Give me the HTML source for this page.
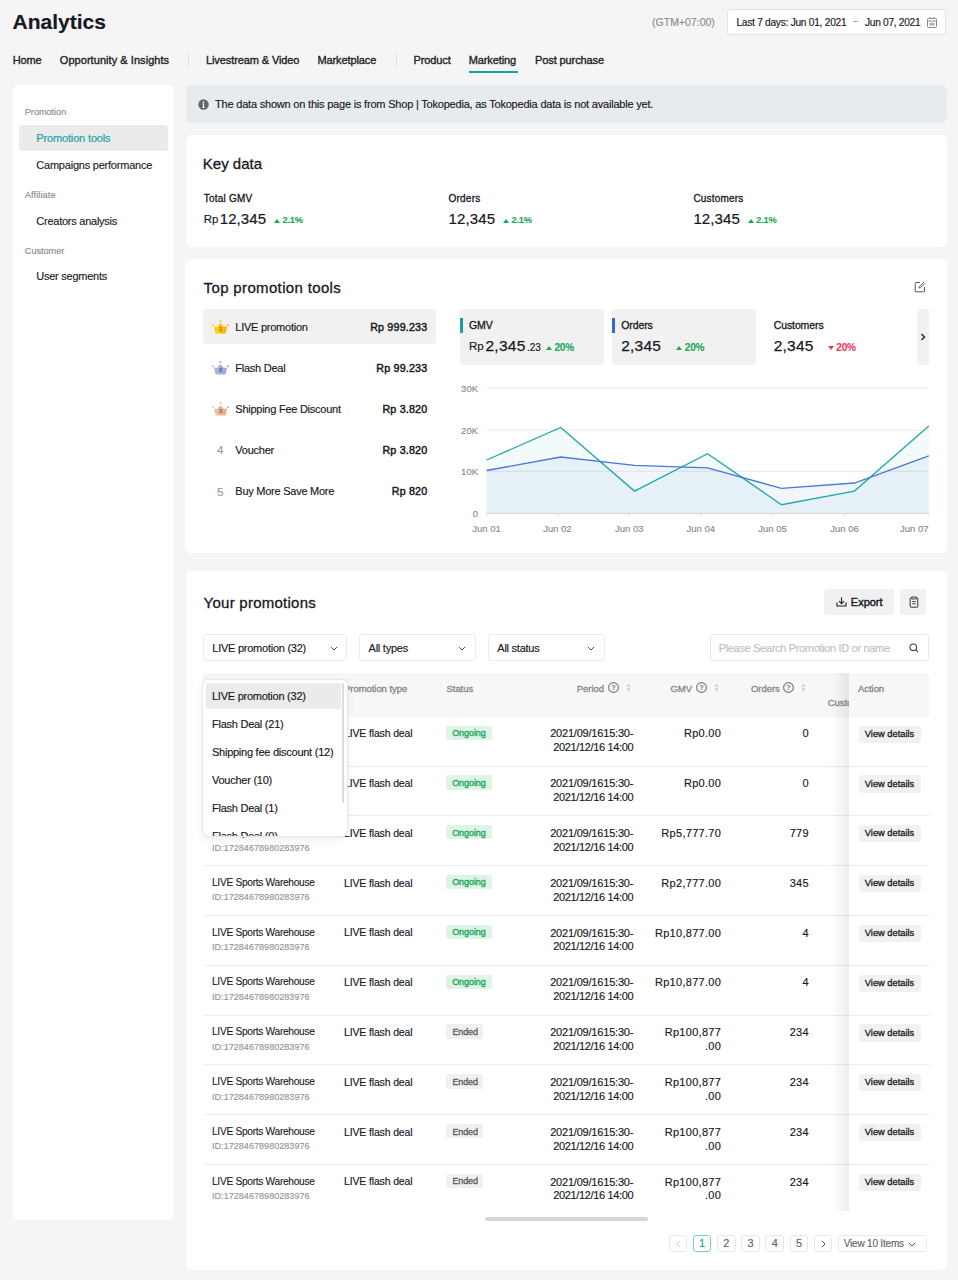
<!DOCTYPE html>
<html><head><meta charset="utf-8"><style>
html,body{margin:0;padding:0}
body{width:958px;height:1280px;overflow:hidden;background:#f5f5f5;position:relative;font-family:"Liberation Sans",sans-serif;color:#161823}
.a{position:absolute;line-height:1;white-space:nowrap;-webkit-text-stroke-width:0.15px}
.b{position:absolute}
</style></head><body>
<div class="a" style="left:12.50px;top:11.42px;font-size:21px;font-weight:700;color:#161823">Analytics</div>
<div class="a" style="right:243.20px;top:17.41px;font-size:10.5px;color:#8a8b91">(GTM+07:00)</div>
<div class="b" style="left:727.40px;top:9.00px;width:218.20px;height:25.60px;background:#fff;border:1px solid #e3e3e3;border-radius:3px;box-sizing:border-box"></div>
<div class="a" style="left:736.40px;top:17.66px;font-size:10.2px;color:#161823;letter-spacing:-0.27px">Last 7 days: Jun 01, 2021</div>
<div class="b" style="left:853.20px;top:21.20px;width:4.80px;height:1.00px;background:#aaa"></div>
<div class="a" style="left:865.00px;top:17.66px;font-size:10.2px;color:#161823;letter-spacing:-0.3px">Jun 07, 2021</div>
<svg class="b" style="left:925.5px;top:15.5px" width="12" height="13" viewBox="0 0 12 13"><rect x="1.5" y="2.5" width="9" height="9" rx="1" fill="none" stroke="#888" stroke-width="1"/><line x1="1.5" y1="5" x2="10.5" y2="5" stroke="#888"/><line x1="4" y1="1" x2="4" y2="3" stroke="#888"/><line x1="8" y1="1" x2="8" y2="3" stroke="#888"/><rect x="3.5" y="7" width="5" height="2.5" fill="#aaa"/></svg>
<div class="a" style="left:12.70px;top:54.69px;font-size:11px;color:#222;-webkit-text-stroke:0.35px #222;letter-spacing:-0.1px">Home</div>
<div class="a" style="left:59.80px;top:54.69px;font-size:11px;color:#222;-webkit-text-stroke:0.35px #222;letter-spacing:0.05px">Opportunity &amp; Insights</div>
<div class="a" style="left:206.00px;top:54.69px;font-size:11px;color:#222;-webkit-text-stroke:0.35px #222;letter-spacing:-0.1px">Livestream &amp; Video</div>
<div class="a" style="left:317.40px;top:54.69px;font-size:11px;color:#222;-webkit-text-stroke:0.35px #222;letter-spacing:-0.1px">Marketplace</div>
<div class="a" style="left:413.50px;top:54.69px;font-size:11px;color:#222;-webkit-text-stroke:0.35px #222;letter-spacing:-0.1px">Product</div>
<div class="a" style="left:468.70px;top:54.69px;font-size:11px;color:#222;-webkit-text-stroke:0.35px #222;letter-spacing:-0.1px">Marketing</div>
<div class="a" style="left:535.00px;top:54.69px;font-size:11px;color:#222;-webkit-text-stroke:0.35px #222;letter-spacing:-0.1px">Post purchase</div>
<div class="b" style="left:188.00px;top:55.00px;width:1.00px;height:10.00px;background:#ddd"></div>
<div class="b" style="left:395.50px;top:55.00px;width:1.00px;height:10.00px;background:#ddd"></div>
<div class="b" style="left:468.70px;top:71.30px;width:49.00px;height:2.00px;background:#16a0a0"></div>
<div class="b" style="left:12.90px;top:85.00px;width:161.10px;height:1135.40px;background:#fff;border-radius:6px"></div>
<div class="b" style="left:18.80px;top:124.80px;width:149.20px;height:26.00px;background:#ebebeb;border-radius:3px"></div>
<div class="a" style="left:24.80px;top:107.51px;font-size:9.2px;color:#8a8b91;letter-spacing:-0.05px">Promotion</div>
<div class="a" style="left:36.30px;top:132.59px;font-size:11px;color:#16a0a0;letter-spacing:-0.15px">Promotion tools</div>
<div class="a" style="left:36.30px;top:160.39px;font-size:11px;color:#222;letter-spacing:-0.22px">Campaigns performance</div>
<div class="a" style="left:24.80px;top:191.01px;font-size:9.2px;color:#8a8b91;letter-spacing:0.1px">Affiliate</div>
<div class="a" style="left:36.30px;top:215.89px;font-size:11px;color:#222;letter-spacing:-0.25px">Creators analysis</div>
<div class="a" style="left:24.80px;top:246.81px;font-size:9.2px;color:#8a8b91;letter-spacing:-0.05px">Customer</div>
<div class="a" style="left:36.30px;top:271.49px;font-size:11px;color:#222;letter-spacing:-0.25px">User segments</div>
<div class="b" style="left:185.50px;top:85.00px;width:761.70px;height:37.60px;background:#e8ebee;border-radius:6px"></div>
<svg class="b" style="left:197.8px;top:98.6px" width="11" height="11" viewBox="0 0 11 11"><circle cx="5.5" cy="5.5" r="5.2" fill="#64676d"/><path d="M4.4 4.6 H6.1 V8.2 H6.7 V8.9 H4.3 V8.2 H4.9 V5.3 H4.4 Z" fill="#fff"/><circle cx="5.5" cy="3.1" r="0.85" fill="#fff"/></svg>
<div class="a" style="left:215.00px;top:98.69px;font-size:11px;color:#161823;letter-spacing:-0.2px">The data shown on this page is from Shop | Tokopedia, as Tokopedia data is not available yet.</div>
<div class="b" style="left:185.50px;top:134.50px;width:761.70px;height:112.50px;background:#fff;border-radius:6px"></div>
<div class="a" style="left:202.80px;top:156.10px;font-size:15px;color:#161823;-webkit-text-stroke:0.3px #161823;letter-spacing:0px">Key data</div>
<div class="a" style="left:203.80px;top:193.83px;font-size:10px;color:#161823;-webkit-text-stroke:0.3px #161823;letter-spacing:0.2px">Total GMV</div>
<div class="a" style="left:203.80px;top:214.06px;font-size:11.5px;color:#161823">Rp</div>
<div class="a" style="left:219.70px;top:211.30px;font-size:15px;color:#161823;letter-spacing:0.1px;-webkit-text-stroke:0.2px #161823">12,345</div>
<svg class="b" style="left:274.0px;top:219px" width="6" height="4" viewBox="0 0 6 4"><path d="M0 4 L3 0 L6 4Z" fill="#1ca85a"/></svg>
<div class="a" style="left:282.50px;top:216.13px;font-size:9.3px;color:#1ca85a;font-weight:700;letter-spacing:-0.2px">2.1%</div>
<div class="a" style="left:448.60px;top:193.83px;font-size:10px;color:#161823;-webkit-text-stroke:0.3px #161823;letter-spacing:0.2px">Orders</div>
<div class="a" style="left:448.60px;top:211.30px;font-size:15px;color:#161823;letter-spacing:0.1px;-webkit-text-stroke:0.2px #161823">12,345</div>
<svg class="b" style="left:502.9px;top:219px" width="6" height="4" viewBox="0 0 6 4"><path d="M0 4 L3 0 L6 4Z" fill="#1ca85a"/></svg>
<div class="a" style="left:511.40px;top:216.13px;font-size:9.3px;color:#1ca85a;font-weight:700;letter-spacing:-0.2px">2.1%</div>
<div class="a" style="left:693.40px;top:193.83px;font-size:10px;color:#161823;-webkit-text-stroke:0.3px #161823;letter-spacing:0.2px">Customers</div>
<div class="a" style="left:693.40px;top:211.30px;font-size:15px;color:#161823;letter-spacing:0.1px;-webkit-text-stroke:0.2px #161823">12,345</div>
<svg class="b" style="left:747.7px;top:219px" width="6" height="4" viewBox="0 0 6 4"><path d="M0 4 L3 0 L6 4Z" fill="#1ca85a"/></svg>
<div class="a" style="left:756.20px;top:216.13px;font-size:9.3px;color:#1ca85a;font-weight:700;letter-spacing:-0.2px">2.1%</div>
<div class="b" style="left:185.00px;top:259.40px;width:762.20px;height:293.80px;background:#fff;border-radius:6px"></div>
<div class="a" style="left:203.60px;top:279.60px;font-size:15px;color:#161823;-webkit-text-stroke:0.3px #161823;letter-spacing:0.35px">Top promotion tools</div>
<svg class="b" style="left:914px;top:281px" width="12" height="12" viewBox="0 0 12 12"><path d="M6 1.5 H2 a0.8 0.8 0 0 0 -0.8 0.8 V10 a0.8 0.8 0 0 0 0.8 0.8 H9.7 a0.8 0.8 0 0 0 0.8 -0.8 V6" fill="none" stroke="#555" stroke-width="1"/><path d="M5 7 L5.3 5.6 L9.6 1.3 L10.7 2.4 L6.4 6.7 Z" fill="none" stroke="#555" stroke-width="0.9"/></svg>
<div class="b" style="left:203.00px;top:309.30px;width:233.40px;height:34.70px;background:#f1f1f1;border-radius:3px"></div>
<svg class="b" style="left:212.4px;top:320px" width="17" height="14" viewBox="0 0 17 14"><defs><linearGradient id="g1" x1="0" x2="1" y1="0" y2="0"><stop offset="0" stop-color="#ffd51c"/><stop offset="1" stop-color="#ffae00"/></linearGradient></defs><circle cx="8.5" cy="1.2" r="1.15" fill="#ffd51c"/><circle cx="0.9" cy="5.2" r="1.05" fill="#ffd51c"/><circle cx="15.9" cy="5.2" r="1.05" fill="#ffae00"/><path d="M1.8 6.4 L5.1 6.9 L8.3 2.9 L11.9 6.9 L15.0 6.4 L13.6 13.4 H3.6 Z" fill="url(#g1)"/><text x="8.5" y="11.3" font-size="5.5" font-family="Liberation Sans" font-weight="700" text-anchor="middle" fill="#9a6400">1</text></svg>
<svg class="b" style="left:212.4px;top:360.6px" width="17" height="14" viewBox="0 0 17 14"><defs><linearGradient id="g2" x1="0" x2="1" y1="0" y2="0"><stop offset="0" stop-color="#a9bedf"/><stop offset="1" stop-color="#94acd4"/></linearGradient></defs><circle cx="8.5" cy="1.2" r="1.15" fill="#a9bedf"/><circle cx="0.9" cy="5.2" r="1.05" fill="#a9bedf"/><circle cx="15.9" cy="5.2" r="1.05" fill="#94acd4"/><path d="M1.8 6.4 L5.1 6.9 L8.3 2.9 L11.9 6.9 L15.0 6.4 L13.6 13.4 H3.6 Z" fill="url(#g2)"/><text x="8.5" y="11.3" font-size="5.5" font-family="Liberation Sans" font-weight="700" text-anchor="middle" fill="#3d5588">2</text></svg>
<svg class="b" style="left:212.4px;top:401.6px" width="17" height="14" viewBox="0 0 17 14"><defs><linearGradient id="g3" x1="0" x2="1" y1="0" y2="0"><stop offset="0" stop-color="#f2c7a8"/><stop offset="1" stop-color="#e5ab84"/></linearGradient></defs><circle cx="8.5" cy="1.2" r="1.15" fill="#f2c7a8"/><circle cx="0.9" cy="5.2" r="1.05" fill="#f2c7a8"/><circle cx="15.9" cy="5.2" r="1.05" fill="#e5ab84"/><path d="M1.8 6.4 L5.1 6.9 L8.3 2.9 L11.9 6.9 L15.0 6.4 L13.6 13.4 H3.6 Z" fill="url(#g3)"/><text x="8.5" y="11.3" font-size="5.5" font-family="Liberation Sans" font-weight="700" text-anchor="middle" fill="#8a5a3a">3</text></svg>
<div class="a" style="left:216.90px;top:444.96px;font-size:11.5px;color:#9a9a9a">4</div>
<div class="a" style="left:216.90px;top:486.56px;font-size:11.5px;color:#9a9a9a">5</div>
<div class="a" style="left:235.30px;top:321.69px;font-size:11px;color:#161823;letter-spacing:-0.25px">LIVE promotion</div>
<div class="a" style="right:530.60px;top:321.94px;font-size:10.7px;color:#161823;-webkit-text-stroke:0.45px #161823;letter-spacing:0.2px">Rp 999.233</div>
<div class="a" style="left:235.30px;top:362.69px;font-size:11px;color:#161823;letter-spacing:-0.25px">Flash Deal</div>
<div class="a" style="right:530.60px;top:362.94px;font-size:10.7px;color:#161823;-webkit-text-stroke:0.45px #161823;letter-spacing:0.2px">Rp 99.233</div>
<div class="a" style="left:235.30px;top:403.69px;font-size:11px;color:#161823;letter-spacing:-0.25px">Shipping Fee Discount</div>
<div class="a" style="right:530.60px;top:403.94px;font-size:10.7px;color:#161823;-webkit-text-stroke:0.45px #161823;letter-spacing:0.2px">Rp 3.820</div>
<div class="a" style="left:235.30px;top:444.69px;font-size:11px;color:#161823;letter-spacing:-0.25px">Voucher</div>
<div class="a" style="right:530.60px;top:444.94px;font-size:10.7px;color:#161823;-webkit-text-stroke:0.45px #161823;letter-spacing:0.2px">Rp 3.820</div>
<div class="a" style="left:235.30px;top:485.69px;font-size:11px;color:#161823;letter-spacing:-0.25px">Buy More Save More</div>
<div class="a" style="right:530.60px;top:485.94px;font-size:10.7px;color:#161823;-webkit-text-stroke:0.45px #161823;letter-spacing:0.2px">Rp 820</div>
<div class="b" style="left:460.20px;top:309.30px;width:143.40px;height:55.40px;background:#f1f1f1;border-radius:3px"></div>
<div class="b" style="left:612.20px;top:309.30px;width:143.40px;height:55.40px;background:#f1f1f1;border-radius:3px"></div>
<div class="b" style="left:460.20px;top:317.80px;width:2.90px;height:14.90px;background:#16a0a0"></div>
<div class="b" style="left:612.20px;top:317.80px;width:2.90px;height:14.90px;background:#3468d8"></div>
<div class="b" style="left:917.00px;top:309.30px;width:11.60px;height:55.40px;background:#f1f1f1;border-radius:2px 0 0 2px"></div>
<svg class="b" style="left:919.5px;top:333px" width="6" height="8" viewBox="0 0 6 8"><path d="M1.5 1 L4.5 4 L1.5 7" fill="none" stroke="#222" stroke-width="1.4"/></svg>
<div class="a" style="left:469.00px;top:320.41px;font-size:10.5px;color:#161823;-webkit-text-stroke:0.3px #161823;letter-spacing:-0.1px">GMV</div>
<div class="a" style="left:621.20px;top:320.41px;font-size:10.5px;color:#161823;-webkit-text-stroke:0.3px #161823;letter-spacing:-0.1px">Orders</div>
<div class="a" style="left:773.70px;top:320.41px;font-size:10.5px;color:#161823;-webkit-text-stroke:0.3px #161823;letter-spacing:-0.1px">Customers</div>
<div class="a" style="left:469.00px;top:341.36px;font-size:11.5px;color:#161823">Rp</div>
<div class="a" style="left:485.50px;top:337.98px;font-size:15.5px;color:#161823;letter-spacing:0.25px;-webkit-text-stroke:0.25px #161823">2,345</div>
<div class="a" style="left:527.00px;top:342.63px;font-size:10px;color:#161823">.23</div>
<div class="a" style="left:621.20px;top:337.98px;font-size:15.5px;color:#161823;letter-spacing:0.25px;-webkit-text-stroke:0.25px #161823">2,345</div>
<div class="a" style="left:773.70px;top:337.98px;font-size:15.5px;color:#161823;letter-spacing:0.25px;-webkit-text-stroke:0.25px #161823">2,345</div>
<svg class="b" style="left:546px;top:345.5px" width="6" height="4" viewBox="0 0 6 4"><path d="M0 4 L3 0 L6 4Z" fill="#1ca85a"/></svg>
<div class="a" style="left:554.50px;top:342.63px;font-size:10px;color:#1ca85a;font-weight:700;letter-spacing:-0.2px">20%</div>
<svg class="b" style="left:676.3px;top:345.5px" width="6" height="4" viewBox="0 0 6 4"><path d="M0 4 L3 0 L6 4Z" fill="#1ca85a"/></svg>
<div class="a" style="left:684.80px;top:342.63px;font-size:10px;color:#1ca85a;font-weight:700;letter-spacing:-0.2px">20%</div>
<svg class="b" style="left:827.8px;top:345.5px" width="6" height="4" viewBox="0 0 6 4"><path d="M0 0 L6 0 L3 4Z" fill="#e5405c"/></svg>
<div class="a" style="left:836.30px;top:342.63px;font-size:10px;color:#e5405c;font-weight:700;letter-spacing:-0.2px">20%</div>
<svg class="b" style="left:0;top:0" width="958" height="560" viewBox="0 0 958 560"><line x1="486.6" y1="388" x2="928.8" y2="388" stroke="#ececec" stroke-width="1"/><line x1="486.6" y1="430.1" x2="928.8" y2="430.1" stroke="#ececec" stroke-width="1"/><line x1="486.6" y1="471.3" x2="928.8" y2="471.3" stroke="#ececec" stroke-width="1"/><line x1="486.6" y1="513.4" x2="928.8" y2="513.4" stroke="#dedede" stroke-width="1"/><line x1="486.6" y1="513.4" x2="486.6" y2="516.4" stroke="#dedede" stroke-width="1"/><line x1="558" y1="513.4" x2="558" y2="516.4" stroke="#dedede" stroke-width="1"/><line x1="629.1" y1="513.4" x2="629.1" y2="516.4" stroke="#dedede" stroke-width="1"/><line x1="701" y1="513.4" x2="701" y2="516.4" stroke="#dedede" stroke-width="1"/><line x1="772.8" y1="513.4" x2="772.8" y2="516.4" stroke="#dedede" stroke-width="1"/><line x1="844.7" y1="513.4" x2="844.7" y2="516.4" stroke="#dedede" stroke-width="1"/><line x1="928.3" y1="513.4" x2="928.3" y2="516.4" stroke="#dedede" stroke-width="1"/><polygon points="486.6,513.4 486.6,460 560.7,427.4 634.5,491.1 707.6,453.7 781.5,504.7 854.4,491.1 928.8,426 928.8,513.4" fill="rgba(22,160,160,0.055)"/><polygon points="486.6,513.4 486.6,470.5 560.7,457 634.5,465.4 707.6,467.8 781.5,488.4 854.4,483 928.8,455.9 928.8,513.4" fill="rgba(60,120,200,0.065)"/><polyline points="486.6,460 560.7,427.4 634.5,491.1 707.6,453.7 781.5,504.7 854.4,491.1 928.8,426" fill="none" stroke="#20a9a9" stroke-width="1.3" stroke-linejoin="miter"/><polyline points="486.6,470.5 560.7,457 634.5,465.4 707.6,467.8 781.5,488.4 854.4,483 928.8,455.9" fill="none" stroke="#4a78d6" stroke-width="1.3"/></svg>
<div class="a" style="right:480.00px;top:383.56px;font-size:9.5px;color:#8a8a8a">30K</div>
<div class="a" style="right:480.00px;top:425.66px;font-size:9.5px;color:#8a8a8a">20K</div>
<div class="a" style="right:480.00px;top:466.86px;font-size:9.5px;color:#8a8a8a">10K</div>
<div class="a" style="right:480.00px;top:508.96px;font-size:9.5px;color:#8a8a8a">0</div>
<div class="a" style="left:456.5px;width:60px;text-align:center;top:523.86px;font-size:9.5px;color:#8a8a8a">Jun 01</div>
<div class="a" style="left:527.4px;width:60px;text-align:center;top:523.86px;font-size:9.5px;color:#8a8a8a">Jun 02</div>
<div class="a" style="left:599.3px;width:60px;text-align:center;top:523.86px;font-size:9.5px;color:#8a8a8a">Jun 03</div>
<div class="a" style="left:670.7px;width:60px;text-align:center;top:523.86px;font-size:9.5px;color:#8a8a8a">Jun 04</div>
<div class="a" style="left:742.6px;width:60px;text-align:center;top:523.86px;font-size:9.5px;color:#8a8a8a">Jun 05</div>
<div class="a" style="left:814.5px;width:60px;text-align:center;top:523.86px;font-size:9.5px;color:#8a8a8a">Jun 06</div>
<div class="a" style="right:29.50px;top:523.86px;font-size:9.5px;color:#8a8a8a">Jun 07</div>
<div class="b" style="left:185.50px;top:571.00px;width:761.70px;height:698.60px;background:#fff;border-radius:6px"></div>
<div class="a" style="left:203.60px;top:595.00px;font-size:15px;color:#161823;-webkit-text-stroke:0.3px #161823;letter-spacing:0.25px">Your promotions</div>
<div class="b" style="left:824.20px;top:589.00px;width:70.20px;height:26.30px;background:#f1f1f1;border-radius:3px"></div>
<svg class="b" style="left:836px;top:597px" width="11" height="10" viewBox="0 0 11 10"><path d="M5.5 0.5 V6.5 M3 4.2 L5.5 6.7 L8 4.2" fill="none" stroke="#222" stroke-width="1.1"/><path d="M1 5.5 V9 H10 V5.5" fill="none" stroke="#222" stroke-width="1.1"/></svg>
<div class="a" style="left:850.80px;top:596.89px;font-size:11px;color:#161823;-webkit-text-stroke:0.4px #161823">Export</div>
<div class="b" style="left:900.30px;top:589.00px;width:26.10px;height:26.30px;background:#f1f1f1;border-radius:3px"></div>
<svg class="b" style="left:907.5px;top:596px" width="12" height="12" viewBox="0 0 12 12"><rect x="2.2" y="1.8" width="7.6" height="9.4" rx="0.8" fill="none" stroke="#333" stroke-width="1"/><rect x="4" y="1" width="4" height="2" fill="#fff" stroke="#333" stroke-width="0.9"/><line x1="4.2" y1="5.5" x2="7.8" y2="5.5" stroke="#333" stroke-width="0.9"/><line x1="4.2" y1="7.8" x2="7.8" y2="7.8" stroke="#333" stroke-width="0.9"/></svg>
<div class="b" style="left:203.00px;top:634.40px;width:144.40px;height:26.60px;background:#fff;border:1px solid #ebebeb;border-radius:3px;box-sizing:border-box"></div>
<div class="a" style="left:212.30px;top:642.99px;font-size:11px;color:#161823;letter-spacing:-0.25px">LIVE promotion (32)</div>
<svg class="b" style="left:329.5px;top:645.8px" width="8" height="5" viewBox="0 0 8 5"><path d="M0.8 0.8 L4 4 L7.2 0.8" fill="none" stroke="#555" stroke-width="1"/></svg>
<div class="b" style="left:359.30px;top:634.40px;width:116.70px;height:26.60px;background:#fff;border:1px solid #ebebeb;border-radius:3px;box-sizing:border-box"></div>
<div class="a" style="left:368.60px;top:642.99px;font-size:11px;color:#161823;letter-spacing:-0.25px">All types</div>
<svg class="b" style="left:458.2px;top:645.8px" width="8" height="5" viewBox="0 0 8 5"><path d="M0.8 0.8 L4 4 L7.2 0.8" fill="none" stroke="#555" stroke-width="1"/></svg>
<div class="b" style="left:488.00px;top:634.40px;width:117.00px;height:26.60px;background:#fff;border:1px solid #ebebeb;border-radius:3px;box-sizing:border-box"></div>
<div class="a" style="left:497.30px;top:642.99px;font-size:11px;color:#161823;letter-spacing:-0.25px">All status</div>
<svg class="b" style="left:586.5px;top:645.8px" width="8" height="5" viewBox="0 0 8 5"><path d="M0.8 0.8 L4 4 L7.2 0.8" fill="none" stroke="#555" stroke-width="1"/></svg>
<div class="b" style="left:710.00px;top:634.40px;width:219.30px;height:26.60px;background:#fff;border:1px solid #e6e6e6;border-radius:3px;box-sizing:border-box"></div>
<div class="a" style="left:718.70px;top:642.99px;font-size:11px;color:#c0c0c4;letter-spacing:-0.33px">Please Search Promotion ID or name</div>
<svg class="b" style="left:909px;top:642.5px" width="10" height="10" viewBox="0 0 10 10"><circle cx="4.3" cy="4.3" r="3.3" fill="none" stroke="#444" stroke-width="1.1"/><line x1="6.8" y1="6.8" x2="9" y2="9" stroke="#444" stroke-width="1.1"/></svg>
<div class="b" style="left:203.00px;top:673.00px;width:726.00px;height:43.80px;background:#f7f7f7;border-radius:4px 4px 0 0"></div>
<div class="a" style="left:212.00px;top:683.96px;font-size:9.5px;color:#858585;-webkit-text-stroke:0.3px #858585;letter-spacing:-0.05px">Promotion name</div>
<div class="a" style="left:344.00px;top:683.96px;font-size:9.5px;color:#858585;-webkit-text-stroke:0.3px #858585;letter-spacing:-0.05px">Promotion type</div>
<div class="a" style="left:446.50px;top:683.96px;font-size:9.5px;color:#858585;-webkit-text-stroke:0.3px #858585;letter-spacing:-0.05px">Status</div>
<div class="a" style="right:354.00px;top:683.96px;font-size:9.5px;color:#858585;-webkit-text-stroke:0.3px #858585;letter-spacing:-0.05px">Period</div>
<svg class="b" style="left:607.5px;top:682.4px" width="11" height="11" viewBox="0 0 11 11"><circle cx="5.5" cy="5.5" r="4.9" fill="none" stroke="#7c7c7c" stroke-width="1.15"/><text x="5.5" y="8.3" font-size="7.8" font-family="Liberation Sans" font-weight="700" text-anchor="middle" fill="#7c7c7c">?</text></svg>
<svg class="b" style="left:625.5px;top:682.5px" width="5" height="9" viewBox="0 0 5 9"><path d="M0.5 3.5 L2.5 1 L4.5 3.5Z M0.5 5.5 L2.5 8 L4.5 5.5Z" fill="#c4c4c4"/></svg>
<div class="a" style="right:266.00px;top:683.96px;font-size:9.5px;color:#858585;-webkit-text-stroke:0.3px #858585;letter-spacing:-0.05px">GMV</div>
<svg class="b" style="left:695.5px;top:682.4px" width="11" height="11" viewBox="0 0 11 11"><circle cx="5.5" cy="5.5" r="4.9" fill="none" stroke="#7c7c7c" stroke-width="1.15"/><text x="5.5" y="8.3" font-size="7.8" font-family="Liberation Sans" font-weight="700" text-anchor="middle" fill="#7c7c7c">?</text></svg>
<svg class="b" style="left:713.5px;top:682.5px" width="5" height="9" viewBox="0 0 5 9"><path d="M0.5 3.5 L2.5 1 L4.5 3.5Z M0.5 5.5 L2.5 8 L4.5 5.5Z" fill="#c4c4c4"/></svg>
<div class="a" style="right:178.30px;top:683.96px;font-size:9.5px;color:#858585;-webkit-text-stroke:0.3px #858585;letter-spacing:-0.05px">Orders</div>
<svg class="b" style="left:783.4px;top:682.4px" width="11" height="11" viewBox="0 0 11 11"><circle cx="5.5" cy="5.5" r="4.9" fill="none" stroke="#7c7c7c" stroke-width="1.15"/><text x="5.5" y="8.3" font-size="7.8" font-family="Liberation Sans" font-weight="700" text-anchor="middle" fill="#7c7c7c">?</text></svg>
<svg class="b" style="left:801px;top:682.5px" width="5" height="9" viewBox="0 0 5 9"><path d="M0.5 3.5 L2.5 1 L4.5 3.5Z M0.5 5.5 L2.5 8 L4.5 5.5Z" fill="#c4c4c4"/></svg>
<div class="a" style="left:827.70px;top:698.26px;font-size:9.5px;color:#858585;-webkit-text-stroke:0.3px #858585;letter-spacing:-0.05px">Customers</div>
<div class="b" style="left:203.00px;top:765.60px;width:726.00px;height:1.00px;background:#ededed"></div>
<div class="a" style="left:212.00px;top:728.36px;font-size:10.2px;color:#161823;letter-spacing:-0.3px;-webkit-text-stroke:0.1px #161823">LIVE Sports Warehouse</div>
<div class="a" style="left:212.00px;top:744.08px;font-size:9px;color:#959595;letter-spacing:0.05px">ID:17284678980283976</div>
<div class="a" style="left:344.00px;top:728.11px;font-size:10.5px;color:#161823;letter-spacing:-0.15px">LIVE flash deal</div>
<div class="b" style="left:446.40px;top:725.60px;width:45.80px;height:14.30px;background:#dff3e6;border-radius:2.5px"></div>
<div class="a" style="left:452.20px;top:728.98px;font-size:9px;color:#1ca85a;-webkit-text-stroke:0.35px #1ca85a;letter-spacing:-0.07px">Ongoing</div>
<div class="a" style="right:324.80px;top:728.39px;font-size:11px;color:#161823;letter-spacing:-0.2px">2021/09/1615:30-</div>
<div class="a" style="right:324.80px;top:742.29px;font-size:11px;color:#161823;letter-spacing:-0.35px">2021/12/16 14:00</div>
<div class="a" style="right:236.80px;top:728.39px;font-size:11px;color:#161823;letter-spacing:0.3px">Rp0.00</div>
<div class="a" style="right:149.10px;top:728.39px;font-size:11px;color:#161823;letter-spacing:0.3px">0</div>
<div class="b" style="left:203.00px;top:815.40px;width:726.00px;height:1.00px;background:#ededed"></div>
<div class="a" style="left:212.00px;top:778.16px;font-size:10.2px;color:#161823;letter-spacing:-0.3px;-webkit-text-stroke:0.1px #161823">LIVE Sports Warehouse</div>
<div class="a" style="left:212.00px;top:793.88px;font-size:9px;color:#959595;letter-spacing:0.05px">ID:17284678980283976</div>
<div class="a" style="left:344.00px;top:777.91px;font-size:10.5px;color:#161823;letter-spacing:-0.15px">LIVE flash deal</div>
<div class="b" style="left:446.40px;top:775.40px;width:45.80px;height:14.30px;background:#dff3e6;border-radius:2.5px"></div>
<div class="a" style="left:452.20px;top:778.78px;font-size:9px;color:#1ca85a;-webkit-text-stroke:0.35px #1ca85a;letter-spacing:-0.07px">Ongoing</div>
<div class="a" style="right:324.80px;top:778.19px;font-size:11px;color:#161823;letter-spacing:-0.2px">2021/09/1615:30-</div>
<div class="a" style="right:324.80px;top:792.09px;font-size:11px;color:#161823;letter-spacing:-0.35px">2021/12/16 14:00</div>
<div class="a" style="right:236.80px;top:778.19px;font-size:11px;color:#161823;letter-spacing:0.3px">Rp0.00</div>
<div class="a" style="right:149.10px;top:778.19px;font-size:11px;color:#161823;letter-spacing:0.3px">0</div>
<div class="b" style="left:203.00px;top:865.20px;width:726.00px;height:1.00px;background:#ededed"></div>
<div class="a" style="left:212.00px;top:827.96px;font-size:10.2px;color:#161823;letter-spacing:-0.3px;-webkit-text-stroke:0.1px #161823">LIVE Sports Warehouse</div>
<div class="a" style="left:212.00px;top:843.68px;font-size:9px;color:#959595;letter-spacing:0.05px">ID:17284678980283976</div>
<div class="a" style="left:344.00px;top:827.71px;font-size:10.5px;color:#161823;letter-spacing:-0.15px">LIVE flash deal</div>
<div class="b" style="left:446.40px;top:825.20px;width:45.80px;height:14.30px;background:#dff3e6;border-radius:2.5px"></div>
<div class="a" style="left:452.20px;top:828.58px;font-size:9px;color:#1ca85a;-webkit-text-stroke:0.35px #1ca85a;letter-spacing:-0.07px">Ongoing</div>
<div class="a" style="right:324.80px;top:827.99px;font-size:11px;color:#161823;letter-spacing:-0.2px">2021/09/1615:30-</div>
<div class="a" style="right:324.80px;top:841.89px;font-size:11px;color:#161823;letter-spacing:-0.35px">2021/12/16 14:00</div>
<div class="a" style="right:236.80px;top:827.99px;font-size:11px;color:#161823;letter-spacing:0.3px">Rp5,777.70</div>
<div class="a" style="right:149.10px;top:827.99px;font-size:11px;color:#161823;letter-spacing:0.3px">779</div>
<div class="b" style="left:203.00px;top:915.00px;width:726.00px;height:1.00px;background:#ededed"></div>
<div class="a" style="left:212.00px;top:877.76px;font-size:10.2px;color:#161823;letter-spacing:-0.3px;-webkit-text-stroke:0.1px #161823">LIVE Sports Warehouse</div>
<div class="a" style="left:212.00px;top:893.48px;font-size:9px;color:#959595;letter-spacing:0.05px">ID:17284678980283976</div>
<div class="a" style="left:344.00px;top:877.51px;font-size:10.5px;color:#161823;letter-spacing:-0.15px">LIVE flash deal</div>
<div class="b" style="left:446.40px;top:875.00px;width:45.80px;height:14.30px;background:#dff3e6;border-radius:2.5px"></div>
<div class="a" style="left:452.20px;top:878.38px;font-size:9px;color:#1ca85a;-webkit-text-stroke:0.35px #1ca85a;letter-spacing:-0.07px">Ongoing</div>
<div class="a" style="right:324.80px;top:877.79px;font-size:11px;color:#161823;letter-spacing:-0.2px">2021/09/1615:30-</div>
<div class="a" style="right:324.80px;top:891.69px;font-size:11px;color:#161823;letter-spacing:-0.35px">2021/12/16 14:00</div>
<div class="a" style="right:236.80px;top:877.79px;font-size:11px;color:#161823;letter-spacing:0.3px">Rp2,777.00</div>
<div class="a" style="right:149.10px;top:877.79px;font-size:11px;color:#161823;letter-spacing:0.3px">345</div>
<div class="b" style="left:203.00px;top:964.80px;width:726.00px;height:1.00px;background:#ededed"></div>
<div class="a" style="left:212.00px;top:927.56px;font-size:10.2px;color:#161823;letter-spacing:-0.3px;-webkit-text-stroke:0.1px #161823">LIVE Sports Warehouse</div>
<div class="a" style="left:212.00px;top:943.28px;font-size:9px;color:#959595;letter-spacing:0.05px">ID:17284678980283976</div>
<div class="a" style="left:344.00px;top:927.31px;font-size:10.5px;color:#161823;letter-spacing:-0.15px">LIVE flash deal</div>
<div class="b" style="left:446.40px;top:924.80px;width:45.80px;height:14.30px;background:#dff3e6;border-radius:2.5px"></div>
<div class="a" style="left:452.20px;top:928.18px;font-size:9px;color:#1ca85a;-webkit-text-stroke:0.35px #1ca85a;letter-spacing:-0.07px">Ongoing</div>
<div class="a" style="right:324.80px;top:927.59px;font-size:11px;color:#161823;letter-spacing:-0.2px">2021/09/1615:30-</div>
<div class="a" style="right:324.80px;top:941.49px;font-size:11px;color:#161823;letter-spacing:-0.35px">2021/12/16 14:00</div>
<div class="a" style="right:236.80px;top:927.59px;font-size:11px;color:#161823;letter-spacing:0.3px">Rp10,877.00</div>
<div class="a" style="right:149.10px;top:927.59px;font-size:11px;color:#161823;letter-spacing:0.3px">4</div>
<div class="b" style="left:203.00px;top:1014.60px;width:726.00px;height:1.00px;background:#ededed"></div>
<div class="a" style="left:212.00px;top:977.36px;font-size:10.2px;color:#161823;letter-spacing:-0.3px;-webkit-text-stroke:0.1px #161823">LIVE Sports Warehouse</div>
<div class="a" style="left:212.00px;top:993.08px;font-size:9px;color:#959595;letter-spacing:0.05px">ID:17284678980283976</div>
<div class="a" style="left:344.00px;top:977.11px;font-size:10.5px;color:#161823;letter-spacing:-0.15px">LIVE flash deal</div>
<div class="b" style="left:446.40px;top:974.60px;width:45.80px;height:14.30px;background:#dff3e6;border-radius:2.5px"></div>
<div class="a" style="left:452.20px;top:977.98px;font-size:9px;color:#1ca85a;-webkit-text-stroke:0.35px #1ca85a;letter-spacing:-0.07px">Ongoing</div>
<div class="a" style="right:324.80px;top:977.39px;font-size:11px;color:#161823;letter-spacing:-0.2px">2021/09/1615:30-</div>
<div class="a" style="right:324.80px;top:991.29px;font-size:11px;color:#161823;letter-spacing:-0.35px">2021/12/16 14:00</div>
<div class="a" style="right:236.80px;top:977.39px;font-size:11px;color:#161823;letter-spacing:0.3px">Rp10,877.00</div>
<div class="a" style="right:149.10px;top:977.39px;font-size:11px;color:#161823;letter-spacing:0.3px">4</div>
<div class="b" style="left:203.00px;top:1064.40px;width:726.00px;height:1.00px;background:#ededed"></div>
<div class="a" style="left:212.00px;top:1027.16px;font-size:10.2px;color:#161823;letter-spacing:-0.3px;-webkit-text-stroke:0.1px #161823">LIVE Sports Warehouse</div>
<div class="a" style="left:212.00px;top:1042.88px;font-size:9px;color:#959595;letter-spacing:0.05px">ID:17284678980283976</div>
<div class="a" style="left:344.00px;top:1026.91px;font-size:10.5px;color:#161823;letter-spacing:-0.15px">LIVE flash deal</div>
<div class="b" style="left:446.40px;top:1024.30px;width:36.20px;height:14.50px;background:#f0f0f0;border-radius:2.5px"></div>
<div class="a" style="left:452.40px;top:1027.98px;font-size:9px;color:#5a5a5a;-webkit-text-stroke:0.3px #5a5a5a;letter-spacing:-0.1px">Ended</div>
<div class="a" style="right:324.80px;top:1027.19px;font-size:11px;color:#161823;letter-spacing:-0.2px">2021/09/1615:30-</div>
<div class="a" style="right:324.80px;top:1041.09px;font-size:11px;color:#161823;letter-spacing:-0.35px">2021/12/16 14:00</div>
<div class="a" style="right:236.80px;top:1027.19px;font-size:11px;color:#161823;letter-spacing:0.3px">Rp100,877</div>
<div class="a" style="right:236.80px;top:1041.09px;font-size:11px;color:#161823;letter-spacing:0.3px">.00</div>
<div class="a" style="right:149.10px;top:1027.19px;font-size:11px;color:#161823;letter-spacing:0.3px">234</div>
<div class="b" style="left:203.00px;top:1114.20px;width:726.00px;height:1.00px;background:#ededed"></div>
<div class="a" style="left:212.00px;top:1076.96px;font-size:10.2px;color:#161823;letter-spacing:-0.3px;-webkit-text-stroke:0.1px #161823">LIVE Sports Warehouse</div>
<div class="a" style="left:212.00px;top:1092.68px;font-size:9px;color:#959595;letter-spacing:0.05px">ID:17284678980283976</div>
<div class="a" style="left:344.00px;top:1076.71px;font-size:10.5px;color:#161823;letter-spacing:-0.15px">LIVE flash deal</div>
<div class="b" style="left:446.40px;top:1074.10px;width:36.20px;height:14.50px;background:#f0f0f0;border-radius:2.5px"></div>
<div class="a" style="left:452.40px;top:1077.78px;font-size:9px;color:#5a5a5a;-webkit-text-stroke:0.3px #5a5a5a;letter-spacing:-0.1px">Ended</div>
<div class="a" style="right:324.80px;top:1076.99px;font-size:11px;color:#161823;letter-spacing:-0.2px">2021/09/1615:30-</div>
<div class="a" style="right:324.80px;top:1090.89px;font-size:11px;color:#161823;letter-spacing:-0.35px">2021/12/16 14:00</div>
<div class="a" style="right:236.80px;top:1076.99px;font-size:11px;color:#161823;letter-spacing:0.3px">Rp100,877</div>
<div class="a" style="right:236.80px;top:1090.89px;font-size:11px;color:#161823;letter-spacing:0.3px">.00</div>
<div class="a" style="right:149.10px;top:1076.99px;font-size:11px;color:#161823;letter-spacing:0.3px">234</div>
<div class="b" style="left:203.00px;top:1164.00px;width:726.00px;height:1.00px;background:#ededed"></div>
<div class="a" style="left:212.00px;top:1126.76px;font-size:10.2px;color:#161823;letter-spacing:-0.3px;-webkit-text-stroke:0.1px #161823">LIVE Sports Warehouse</div>
<div class="a" style="left:212.00px;top:1142.48px;font-size:9px;color:#959595;letter-spacing:0.05px">ID:17284678980283976</div>
<div class="a" style="left:344.00px;top:1126.51px;font-size:10.5px;color:#161823;letter-spacing:-0.15px">LIVE flash deal</div>
<div class="b" style="left:446.40px;top:1123.90px;width:36.20px;height:14.50px;background:#f0f0f0;border-radius:2.5px"></div>
<div class="a" style="left:452.40px;top:1127.58px;font-size:9px;color:#5a5a5a;-webkit-text-stroke:0.3px #5a5a5a;letter-spacing:-0.1px">Ended</div>
<div class="a" style="right:324.80px;top:1126.79px;font-size:11px;color:#161823;letter-spacing:-0.2px">2021/09/1615:30-</div>
<div class="a" style="right:324.80px;top:1140.69px;font-size:11px;color:#161823;letter-spacing:-0.35px">2021/12/16 14:00</div>
<div class="a" style="right:236.80px;top:1126.79px;font-size:11px;color:#161823;letter-spacing:0.3px">Rp100,877</div>
<div class="a" style="right:236.80px;top:1140.69px;font-size:11px;color:#161823;letter-spacing:0.3px">.00</div>
<div class="a" style="right:149.10px;top:1126.79px;font-size:11px;color:#161823;letter-spacing:0.3px">234</div>
<div class="a" style="left:212.00px;top:1176.56px;font-size:10.2px;color:#161823;letter-spacing:-0.3px;-webkit-text-stroke:0.1px #161823">LIVE Sports Warehouse</div>
<div class="a" style="left:212.00px;top:1192.28px;font-size:9px;color:#959595;letter-spacing:0.05px">ID:17284678980283976</div>
<div class="a" style="left:344.00px;top:1176.31px;font-size:10.5px;color:#161823;letter-spacing:-0.15px">LIVE flash deal</div>
<div class="b" style="left:446.40px;top:1173.70px;width:36.20px;height:14.50px;background:#f0f0f0;border-radius:2.5px"></div>
<div class="a" style="left:452.40px;top:1177.38px;font-size:9px;color:#5a5a5a;-webkit-text-stroke:0.3px #5a5a5a;letter-spacing:-0.1px">Ended</div>
<div class="a" style="right:324.80px;top:1176.59px;font-size:11px;color:#161823;letter-spacing:-0.2px">2021/09/1615:30-</div>
<div class="a" style="right:324.80px;top:1190.49px;font-size:11px;color:#161823;letter-spacing:-0.35px">2021/12/16 14:00</div>
<div class="a" style="right:236.80px;top:1176.59px;font-size:11px;color:#161823;letter-spacing:0.3px">Rp100,877</div>
<div class="a" style="right:236.80px;top:1190.49px;font-size:11px;color:#161823;letter-spacing:0.3px">.00</div>
<div class="a" style="right:149.10px;top:1176.59px;font-size:11px;color:#161823;letter-spacing:0.3px">234</div>
<div class="b" style="left:831px;top:673px;width:18px;height:538.2px;background:linear-gradient(to right,rgba(0,0,0,0),rgba(0,0,0,0.07))"></div>
<div class="b" style="left:849px;top:673px;width:80px;height:538.2px;background:#fff"></div>
<div class="b" style="left:849.00px;top:673.00px;width:80.00px;height:43.80px;background:#f7f7f7;border-radius:0 4px 0 0"></div>
<div class="a" style="left:858.00px;top:683.96px;font-size:9.5px;color:#858585;-webkit-text-stroke:0.3px #858585;letter-spacing:-0.05px">Action</div>
<div class="b" style="left:849.00px;top:765.60px;width:80.00px;height:1.00px;background:#ededed"></div>
<div class="b" style="left:858.60px;top:725.50px;width:62.00px;height:17.40px;background:#f1f1f1;border-radius:3px"></div>
<div class="a" style="left:864.80px;top:729.83px;font-size:9.3px;color:#161823;-webkit-text-stroke:0.3px #161823">View details</div>
<div class="b" style="left:849.00px;top:815.40px;width:80.00px;height:1.00px;background:#ededed"></div>
<div class="b" style="left:858.60px;top:775.30px;width:62.00px;height:17.40px;background:#f1f1f1;border-radius:3px"></div>
<div class="a" style="left:864.80px;top:779.63px;font-size:9.3px;color:#161823;-webkit-text-stroke:0.3px #161823">View details</div>
<div class="b" style="left:849.00px;top:865.20px;width:80.00px;height:1.00px;background:#ededed"></div>
<div class="b" style="left:858.60px;top:825.10px;width:62.00px;height:17.40px;background:#f1f1f1;border-radius:3px"></div>
<div class="a" style="left:864.80px;top:829.43px;font-size:9.3px;color:#161823;-webkit-text-stroke:0.3px #161823">View details</div>
<div class="b" style="left:849.00px;top:915.00px;width:80.00px;height:1.00px;background:#ededed"></div>
<div class="b" style="left:858.60px;top:874.90px;width:62.00px;height:17.40px;background:#f1f1f1;border-radius:3px"></div>
<div class="a" style="left:864.80px;top:879.23px;font-size:9.3px;color:#161823;-webkit-text-stroke:0.3px #161823">View details</div>
<div class="b" style="left:849.00px;top:964.80px;width:80.00px;height:1.00px;background:#ededed"></div>
<div class="b" style="left:858.60px;top:924.70px;width:62.00px;height:17.40px;background:#f1f1f1;border-radius:3px"></div>
<div class="a" style="left:864.80px;top:929.03px;font-size:9.3px;color:#161823;-webkit-text-stroke:0.3px #161823">View details</div>
<div class="b" style="left:849.00px;top:1014.60px;width:80.00px;height:1.00px;background:#ededed"></div>
<div class="b" style="left:858.60px;top:974.50px;width:62.00px;height:17.40px;background:#f1f1f1;border-radius:3px"></div>
<div class="a" style="left:864.80px;top:978.83px;font-size:9.3px;color:#161823;-webkit-text-stroke:0.3px #161823">View details</div>
<div class="b" style="left:849.00px;top:1064.40px;width:80.00px;height:1.00px;background:#ededed"></div>
<div class="b" style="left:858.60px;top:1024.30px;width:62.00px;height:17.40px;background:#f1f1f1;border-radius:3px"></div>
<div class="a" style="left:864.80px;top:1028.63px;font-size:9.3px;color:#161823;-webkit-text-stroke:0.3px #161823">View details</div>
<div class="b" style="left:849.00px;top:1114.20px;width:80.00px;height:1.00px;background:#ededed"></div>
<div class="b" style="left:858.60px;top:1074.10px;width:62.00px;height:17.40px;background:#f1f1f1;border-radius:3px"></div>
<div class="a" style="left:864.80px;top:1078.43px;font-size:9.3px;color:#161823;-webkit-text-stroke:0.3px #161823">View details</div>
<div class="b" style="left:849.00px;top:1164.00px;width:80.00px;height:1.00px;background:#ededed"></div>
<div class="b" style="left:858.60px;top:1123.90px;width:62.00px;height:17.40px;background:#f1f1f1;border-radius:3px"></div>
<div class="a" style="left:864.80px;top:1128.23px;font-size:9.3px;color:#161823;-webkit-text-stroke:0.3px #161823">View details</div>
<div class="b" style="left:858.60px;top:1173.70px;width:62.00px;height:17.40px;background:#f1f1f1;border-radius:3px"></div>
<div class="a" style="left:864.80px;top:1178.03px;font-size:9.3px;color:#161823;-webkit-text-stroke:0.3px #161823">View details</div>
<div class="b" style="left:485.00px;top:1216.50px;width:163.00px;height:4.50px;background:#d6d6d6;border-radius:3px"></div>
<div class="b" style="left:668.5px;top:1234.8px;width:18.7px;height:17.6px;border:1px solid #e8e8e8;border-radius:3px;box-sizing:border-box"></div>
<div class="b" style="left:692.7px;top:1234.8px;width:18.7px;height:17.6px;border:1px solid #7ccaca;border-radius:3px;box-sizing:border-box"></div>
<div class="b" style="left:716.9px;top:1234.8px;width:18.7px;height:17.6px;border:1px solid #e8e8e8;border-radius:3px;box-sizing:border-box"></div>
<div class="b" style="left:741.1px;top:1234.8px;width:18.7px;height:17.6px;border:1px solid #e8e8e8;border-radius:3px;box-sizing:border-box"></div>
<div class="b" style="left:765.4px;top:1234.8px;width:18.7px;height:17.6px;border:1px solid #e8e8e8;border-radius:3px;box-sizing:border-box"></div>
<div class="b" style="left:789.6px;top:1234.8px;width:18.7px;height:17.6px;border:1px solid #e8e8e8;border-radius:3px;box-sizing:border-box"></div>
<div class="b" style="left:813.8px;top:1234.8px;width:18.7px;height:17.6px;border:1px solid #e8e8e8;border-radius:3px;box-sizing:border-box"></div>
<div class="a" style="left:692.7px;width:18.7px;text-align:center;top:1238.29px;font-size:11px;color:#16a0a0">1</div>
<div class="a" style="left:716.9px;width:18.7px;text-align:center;top:1238.29px;font-size:11px;color:#666">2</div>
<div class="a" style="left:741.1px;width:18.7px;text-align:center;top:1238.29px;font-size:11px;color:#666">3</div>
<div class="a" style="left:765.4px;width:18.7px;text-align:center;top:1238.29px;font-size:11px;color:#666">4</div>
<div class="a" style="left:789.6px;width:18.7px;text-align:center;top:1238.29px;font-size:11px;color:#666">5</div>
<svg class="b" style="left:675.5px;top:1240px" width="5" height="8" viewBox="0 0 5 8"><path d="M4 0.8 L1 4 L4 7.2" fill="none" stroke="#cfcfcf" stroke-width="1"/></svg>
<svg class="b" style="left:821px;top:1240px" width="5" height="8" viewBox="0 0 5 8"><path d="M1 0.8 L4 4 L1 7.2" fill="none" stroke="#555" stroke-width="1"/></svg>
<div class="b" style="left:838px;top:1234.8px;width:89.3px;height:17.6px;border:1px solid #e8e8e8;border-radius:3px;box-sizing:border-box"></div>
<div class="a" style="left:843.80px;top:1239.33px;font-size:10px;color:#666;letter-spacing:-0.2px">View 10 Items</div>
<svg class="b" style="left:908px;top:1241.8px" width="8" height="5" viewBox="0 0 8 5"><path d="M0.8 0.8 L4 4 L7.2 0.8" fill="none" stroke="#555" stroke-width="1"/></svg>
<div class="b" style="left:203.2px;top:679.6px;width:143.7px;height:156.3px;background:#fff;border-radius:5px;box-shadow:0 0 0 1px #e8e8e8,0 2px 8px rgba(0,0,0,0.10);overflow:hidden">
<div class="b" style="left:3.1px;top:3.7px;width:134.7px;height:25.6px;background:#ebebeb;border-radius:3px"></div>
<div class="a" style="left:8.8px;top:11.29px;font-size:11px;color:#161823;letter-spacing:-0.25px">LIVE promotion (32)</div>
<div class="a" style="left:8.8px;top:39.24px;font-size:11px;color:#161823;letter-spacing:-0.25px">Flash Deal (21)</div>
<div class="a" style="left:8.8px;top:67.19px;font-size:11px;color:#161823;letter-spacing:-0.25px">Shipping fee discount (12)</div>
<div class="a" style="left:8.8px;top:95.14px;font-size:11px;color:#161823;letter-spacing:-0.25px">Voucher (10)</div>
<div class="a" style="left:8.8px;top:123.09px;font-size:11px;color:#161823;letter-spacing:-0.25px">Flash Deal (1)</div>
<div class="a" style="left:8.8px;top:151.04px;font-size:11px;color:#161823;letter-spacing:-0.25px">Flash Deal (0)</div>
<div class="b" style="left:138.4px;top:3.4px;width:2.3px;height:120.4px;background:#dcdcdc;border-radius:2px"></div>
</div>
</body></html>
